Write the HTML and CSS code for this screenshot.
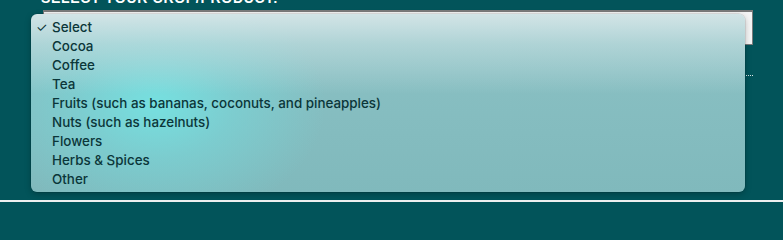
FILE: index.html
```html
<!DOCTYPE html>
<html>
<head>
<meta charset="utf-8">
<link rel="stylesheet" href="styles.css">
</head>
<body>
<div class="page">
  <div class="form">
    <div class="label">SELECT YOUR CROP/PRODUCT:</div>
    <div class="select"><span class="arrow"></span></div>
    <div class="dotted"></div>
  </div>
  <div class="footer"></div>
  <ul class="menu">
    <li class="checked"><span class="check">✓</span>Select</li>
    <li>Cocoa</li>
    <li>Coffee</li>
    <li>Tea</li>
    <li>Fruits (such as bananas, coconuts, and pineapples)</li>
    <li>Nuts (such as hazelnuts)</li>
    <li>Flowers</li>
    <li>Herbs &amp; Spices</li>
    <li>Other</li>
  </ul>
</div>
</body>
</html>
```
FILE: styles.css
```css
html, body {
  margin: 0;
  padding: 0;
}
body {
  background: #02545a;
  width: 783px;
  height: 202px;
  overflow: hidden;
  font-family: Inter, "Noto Sans", sans-serif;
}
.page {
  position: relative;
  height: 202px;
  display: flex;
  flex-direction: column;
}
.form {
  flex: 1;
  padding: 0 30px 0 43px;
}
.label {
  font-family: "Liberation Sans", Arial, sans-serif;
  font-weight: bold;
  font-size: 14px;
  letter-spacing: 0.7px;
  color: #ffffff;
  height: 10px;
  line-height: 10px;
  margin-top: -7px;
  margin-left: -2px;
  overflow: hidden;
}
.select {
  margin-top: 7px;
  height: 32px;
  background: #f4f4f4;
  border: 1px solid #7a7a7a;
  border-top-width: 2px;
  position: relative;
}
.arrow {
  position: absolute;
  right: 7px;
  top: 14px;
  width: 2px;
  height: 2px;
  background: #111;
}
.dotted {
  margin-top: 30px;
  border-top: 1px dotted #d8e4e4;
  height: 0;
}
.footer {
  height: 2px;
  background: #eef0f0;
}
.menu {
  position: absolute;
  left: 31px;
  top: 14px;
  width: 714px;
  height: 178px;
  margin: 0;
  padding: 4px 0 0 0;
  box-sizing: border-box;
  list-style: none;
  border-radius: 6px;
  background:
    linear-gradient(180deg, rgba(214, 230, 232, 0.95) 0px, rgba(200, 224, 226, 0.6) 30px, rgba(170, 210, 214, 0) 80px),
    radial-gradient(ellipse 170px 120px at 125px 90px, rgba(118, 224, 224, 1) 0%, rgba(118, 218, 220, 0.55) 45%, rgba(118, 215, 218, 0) 100%),
    linear-gradient(180deg, #8cc2c5 0%, #80b9bc 100%);
  box-shadow: 0 2px 6px rgba(0, 0, 0, 0.25), 0 0 0 0.5px rgba(0, 0, 0, 0.15);
}
.menu li {
  height: 19px;
  line-height: 19px;
  font-size: 13.4px;
  letter-spacing: 0;
  font-weight: 500;
  color: #0b3639;
  padding-left: 21px;
  position: relative;
  white-space: nowrap;
}
.check {
  position: absolute;
  left: 5px;
  top: 0;
  font-size: 13px;
  font-weight: 400;
}
```
